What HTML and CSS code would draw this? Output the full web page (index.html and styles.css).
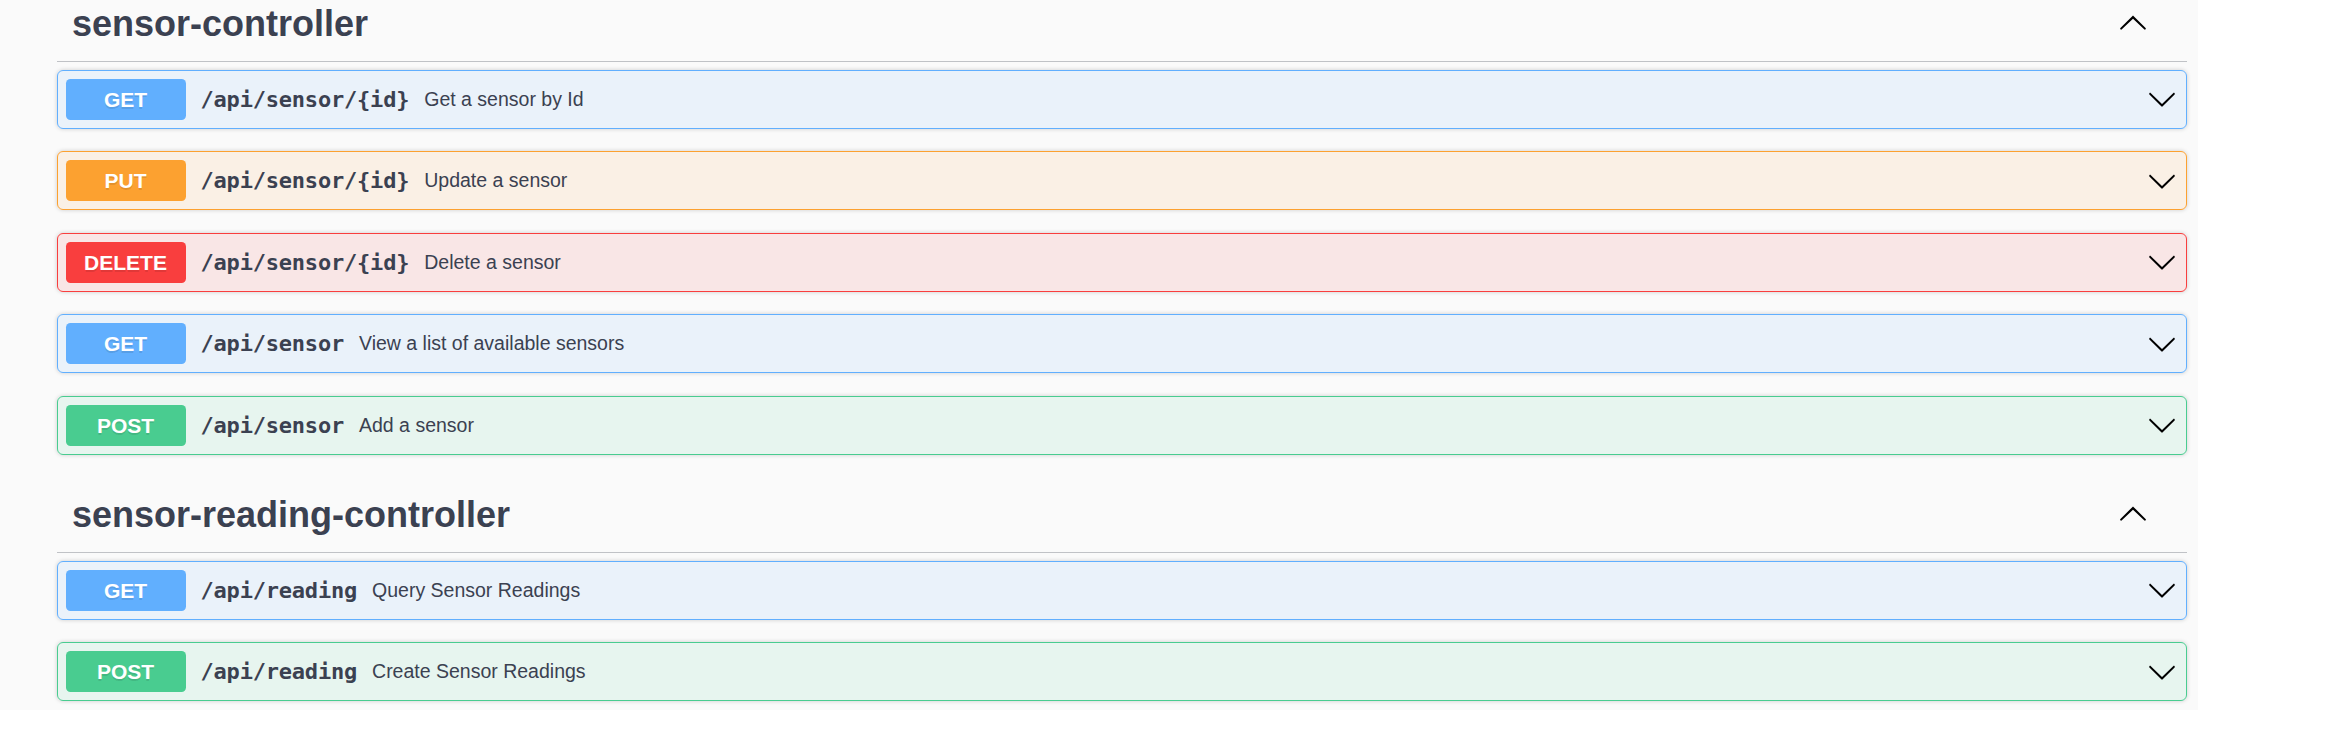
FILE: index.html
```html
<!DOCTYPE html>
<html lang="en">
<head>
<meta charset="utf-8">
<title>Swagger UI</title>
<link rel="stylesheet" href="styles.css">
</head>
<body>
<div class="page">
  <div class="wrapper">
    <section class="tag-section">
      <h3 class="opblock-tag">
        <span class="tag-name">sensor-controller</span>
        <svg class="tag-arrow" viewBox="0 0 20 20" width="30" height="30"><path d="M17.418 14.908c.272.268.709.268.979 0s.271-.701 0-.969l-7.908-7.830c-.27-.268-.707-.268-.979 0l-7.908 7.83c-.27.268-.27.701 0 .969.271.268.709.268.979 0L10 7.768l7.418 7.14z"/></svg>
      </h3>
      <div class="opblock get">
        <div class="summary">
          <span class="method">GET</span>
          <span class="path">/api/sensor/{id}</span>
          <span class="desc">Get a sensor by Id</span>
          <svg class="arrow" viewBox="0 0 20 20" width="30" height="30"><path d="M17.418 6.109c.272-.268.709-.268.979 0s.271.701 0 .969l-7.908 7.83c-.27.268-.707.268-.979 0l-7.908-7.83c-.27-.268-.27-.701 0-.969.271-.268.709-.268.979 0L10 13.25l7.418-7.141z"/></svg>
        </div>
      </div>
      <div class="opblock put">
        <div class="summary">
          <span class="method">PUT</span>
          <span class="path">/api/sensor/{id}</span>
          <span class="desc">Update a sensor</span>
          <svg class="arrow" viewBox="0 0 20 20" width="30" height="30"><path d="M17.418 6.109c.272-.268.709-.268.979 0s.271.701 0 .969l-7.908 7.83c-.27.268-.707.268-.979 0l-7.908-7.83c-.27-.268-.27-.701 0-.969.271-.268.709-.268.979 0L10 13.25l7.418-7.141z"/></svg>
        </div>
      </div>
      <div class="opblock delete">
        <div class="summary">
          <span class="method">DELETE</span>
          <span class="path">/api/sensor/{id}</span>
          <span class="desc">Delete a sensor</span>
          <svg class="arrow" viewBox="0 0 20 20" width="30" height="30"><path d="M17.418 6.109c.272-.268.709-.268.979 0s.271.701 0 .969l-7.908 7.83c-.27.268-.707.268-.979 0l-7.908-7.83c-.27-.268-.27-.701 0-.969.271-.268.709-.268.979 0L10 13.25l7.418-7.141z"/></svg>
        </div>
      </div>
      <div class="opblock get">
        <div class="summary">
          <span class="method">GET</span>
          <span class="path">/api/sensor</span>
          <span class="desc">View a list of available sensors</span>
          <svg class="arrow" viewBox="0 0 20 20" width="30" height="30"><path d="M17.418 6.109c.272-.268.709-.268.979 0s.271.701 0 .969l-7.908 7.83c-.27.268-.707.268-.979 0l-7.908-7.83c-.27-.268-.27-.701 0-.969.271-.268.709-.268.979 0L10 13.25l7.418-7.141z"/></svg>
        </div>
      </div>
      <div class="opblock post">
        <div class="summary">
          <span class="method">POST</span>
          <span class="path">/api/sensor</span>
          <span class="desc">Add a sensor</span>
          <svg class="arrow" viewBox="0 0 20 20" width="30" height="30"><path d="M17.418 6.109c.272-.268.709-.268.979 0s.271.701 0 .969l-7.908 7.83c-.27.268-.707.268-.979 0l-7.908-7.83c-.27-.268-.27-.701 0-.969.271-.268.709-.268.979 0L10 13.25l7.418-7.141z"/></svg>
        </div>
      </div>
    </section>
    <section class="tag-section">
      <h3 class="opblock-tag">
        <span class="tag-name">sensor-reading-controller</span>
        <svg class="tag-arrow" viewBox="0 0 20 20" width="30" height="30"><path d="M17.418 14.908c.272.268.709.268.979 0s.271-.701 0-.969l-7.908-7.83c-.27-.268-.707-.268-.979 0l-7.908 7.83c-.27.268-.27.701 0 .969.271.268.709.268.979 0L10 7.768l7.418 7.14z"/></svg>
      </h3>
      <div class="opblock get">
        <div class="summary">
          <span class="method">GET</span>
          <span class="path">/api/reading</span>
          <span class="desc">Query Sensor Readings</span>
          <svg class="arrow" viewBox="0 0 20 20" width="30" height="30"><path d="M17.418 6.109c.272-.268.709-.268.979 0s.271.701 0 .969l-7.908 7.83c-.27.268-.707.268-.979 0l-7.908-7.83c-.27-.268-.27-.701 0-.969.271-.268.709-.268.979 0L10 13.25l7.418-7.141z"/></svg>
        </div>
      </div>
      <div class="opblock post">
        <div class="summary">
          <span class="method">POST</span>
          <span class="path">/api/reading</span>
          <span class="desc">Create Sensor Readings</span>
          <svg class="arrow" viewBox="0 0 20 20" width="30" height="30"><path d="M17.418 6.109c.272-.268.709-.268.979 0s.271.701 0 .969l-7.908 7.83c-.27.268-.707.268-.979 0l-7.908-7.83c-.27-.268-.27-.701 0-.969.271-.268.709-.268.979 0L10 13.25l7.418-7.141z"/></svg>
        </div>
      </div>
    </section>
  </div>
</div>
</body>
</html>
```

FILE: styles.css
```css
html, body {
  margin: 0;
  padding: 0;
  background: #ffffff;
}

body {
  font-family: "Liberation Sans", Arial, sans-serif;
  color: #3b4151;
}

.page {
  width: 2198px;
  margin-top: -14px;
  background: #fafafa;
  display: flow-root;
}

.wrapper {
  width: 2130px;
  padding-left: 57px;
  display: flow-root;
}

.tag-section {
  display: flex;
  flex-direction: column;
}

.opblock-tag {
  display: flex;
  align-items: center;
  height: 45px;
  margin: 0 0 7.5px;
  padding: 15px 30px 15px 15px;
  border-bottom: 1px solid rgba(59, 65, 81, 0.3);
  font-family: "Liberation Sans", Arial, sans-serif;
  font-size: 36px;
  font-weight: 700;
  color: #3b4151;
}

.tag-name {
  flex: 1 1 auto;
  line-height: normal;
}

.tag-arrow {
  flex: none;
  margin-right: 9.5px;
  margin-bottom: 3.5px;
  fill: #000;
}

.opblock {
  margin: 0 0 22.5px;
  border: 1px solid #000;
  border-radius: 6px;
  box-shadow: 0 0 4.5px rgba(0, 0, 0, 0.19);
}

.tag-section:last-child .opblock:last-child {
  margin-bottom: 9px;
}

.summary {
  display: flex;
  align-items: center;
  padding: 8px 7.5px 8px 7.5px;
}

.method {
  flex: none;
  min-width: 120px;
  height: 41px;
  line-height: 41px;
  border-radius: 4.5px;
  text-align: center;
  font-family: "Liberation Sans", Arial, sans-serif;
  font-size: 21px;
  font-weight: 700;
  color: #fff;
  text-shadow: 0 1.5px 0 rgba(0, 0, 0, 0.1);
}

.path {
  flex: none;
  padding: 0 15px;
  font-family: "DejaVu Sans Mono", "Liberation Mono", monospace;
  font-size: 22px;
  font-weight: 700;
  letter-spacing: -0.2px;
  color: #3b4151;
}

.desc {
  flex: 1 1 auto;
  font-family: "Liberation Sans", Arial, sans-serif;
  font-size: 19.5px;
  color: #3b4151;
}

.arrow {
  flex: none;
  margin-right: 1.5px;
  fill: #000;
}

.opblock.get {
  background: rgba(97, 175, 254, 0.1);
  border-color: #61affe;
}
.opblock.get .method {
  background: #61affe;
}

.opblock.put {
  background: rgba(252, 161, 48, 0.1);
  border-color: #fca130;
}
.opblock.put .method {
  background: #fca130;
}

.opblock.delete {
  background: rgba(249, 62, 62, 0.1);
  border-color: #f93e3e;
}
.opblock.delete .method {
  background: #f93e3e;
}

.opblock.post {
  background: rgba(73, 204, 144, 0.1);
  border-color: #49cc90;
}
.opblock.post .method {
  background: #49cc90;
}
```
